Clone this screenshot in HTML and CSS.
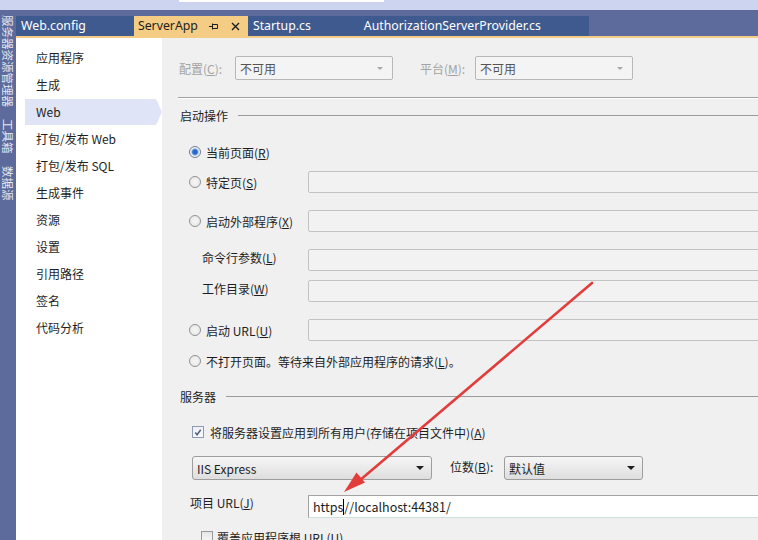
FILE: index.html
```html
<!DOCTYPE html>
<html lang="zh-CN">
<head>
    <meta charset="UTF-8">
    <meta name="viewport" content="width=device-width, initial-scale=1.0">
    <title>ServerApp - 属性</title>
    <link rel="stylesheet" href="styles.css">
</head>
<body>
    <div class="topbar"><div class="topbar-field"></div></div>

    <div class="ide">
        <div class="toolstrip">
            <span class="tooltab">服务器资源管理器</span>
            <span class="tooltab">工具箱</span>
            <span class="tooltab">数据源</span>
        </div>

        <div class="doc">
            <div class="tabs">
                <div class="tab">Web.config</div>
                <div class="tab active">
                    <span>ServerApp</span>
                    <svg class="pin" width="10" height="9" viewBox="0 0 10 9">
                        <path d="M0 4.5H3.5M3.5 1.5V7.5M3.5 2.5H8.5V6.5H3.5" fill="none" stroke="#1e1e1e" stroke-width="1"/>
                    </svg>
                    <svg class="close" width="9" height="9" viewBox="0 0 9 9">
                        <path d="M1 1L8 8M8 1L1 8" stroke="#1e1e1e" stroke-width="1.4"/>
                    </svg>
                </div>
                <div class="tab">Startup.cs</div>
                <div class="tab">AuthorizationServerProvider.cs</div>
            </div>
            <div class="tab-accent"></div>

            <div class="page">
                <ul class="nav">
                    <li>应用程序</li>
                    <li>生成</li>
                    <li class="selected">Web</li>
                    <li>打包/发布 Web</li>
                    <li>打包/发布 SQL</li>
                    <li>生成事件</li>
                    <li>资源</li>
                    <li>设置</li>
                    <li>引用路径</li>
                    <li>签名</li>
                    <li>代码分析</li>
                </ul>

                <div class="props">
                    <div class="config-row">
                        <span class="dim-label">配置(<u>C</u>):</span>
                        <div class="combo disabled"><span>不可用</span><i class="arrow"></i></div>
                        <span class="dim-label platform">平台(<u>M</u>):</span>
                        <div class="combo disabled"><span>不可用</span><i class="arrow"></i></div>
                    </div>

                    <div class="rule"></div>

                    <div class="group-title"><span>启动操作</span></div>

                    <div class="row option-row first">
                        <span class="radio checked"></span>
                        <span>当前页面(<u>R</u>)</span>
                    </div>
                    <div class="row follow">
                        <div class="label-col"><span class="radio"></span><span>特定页(<u>S</u>)</span></div>
                        <div class="textbox"></div>
                    </div>
                    <div class="row">
                        <div class="label-col"><span class="radio"></span><span>启动外部程序(<u>X</u>)</span></div>
                        <div class="textbox"></div>
                    </div>
                    <div class="row">
                        <div class="label-col sub"><span class="sub-label">命令行参数(<u>L</u>)</span></div>
                        <div class="textbox"></div>
                    </div>
                    <div class="row follow">
                        <div class="label-col sub"><span class="sub-label">工作目录(<u>W</u>)</span></div>
                        <div class="textbox"></div>
                    </div>
                    <div class="row">
                        <div class="label-col"><span class="radio"></span><span>启动 URL(<u>U</u>)</span></div>
                        <div class="textbox"></div>
                    </div>
                    <div class="row option-row note">
                        <span class="radio"></span>
                        <span>不打开页面。等待来自外部应用程序的请求(<u>L</u>)。</span>
                    </div>

                    <div class="group-title server"><span>服务器</span></div>

                    <div class="row check-row">
                        <span class="checkbox">
                            <svg width="11" height="11" viewBox="0 0 11 11">
                                <path d="M2.5 5.5L4.5 8L8.5 2.5" fill="none" stroke="#4c5f8a" stroke-width="1.6"/>
                            </svg>
                        </span>
                        <span>将服务器设置应用到所有用户(存储在项目文件中)(<u>A</u>)</span>
                    </div>

                    <div class="row combo-row">
                        <div class="combo server-combo"><span>IIS Express</span><i class="arrow"></i></div>
                        <span class="bits-label">位数(<u>B</u>):</span>
                        <div class="combo bits-combo"><span>默认值</span><i class="arrow"></i></div>
                    </div>

                    <div class="row url-row">
                        <div class="label-col url-label"><span>项目 URL(<u>J</u>)</span></div>
                        <div class="textbox url-box">https<span class="caret"></span>//localhost:44381/</div>
                    </div>

                    <div class="row follow override-row">
                        <span class="checkbox empty"></span>
                        <span>覆盖应用程序根 URL(<u>U</u>)</span>
                    </div>
                </div>
            </div>
        </div>
    </div>

    <!-- red annotation arrow drawn over the screenshot -->
    <svg class="annotation" width="758" height="540" viewBox="0 0 758 540">
        <path d="M592 283L359 481" stroke="#e23d3b" stroke-width="2.6" stroke-linecap="round"/>
        <path d="M344 492L356.5 472.5L365 482.5Z" fill="#e23d3b"/>
    </svg>
</body>
</html>
```

FILE: styles.css
```css
body {
    margin: 0;
    width: 758px;
    height: 540px;
    overflow: hidden;
    position: relative;
    font-family: "Noto Sans CJK SC", "Noto Sans", sans-serif;
    font-size: 12px;
    color: #1e1e1e;
    background: #5c6b9c;
}

.topbar {
    height: 10px;
    background: #ccd4ef;
}

.topbar-field {
    margin-left: 179px;
    width: 205px;
    height: 2px;
    background: #fff;
}

.ide {
    display: flex;
    height: 530px;
}

.toolstrip {
    width: 16px;
    display: flex;
    flex-direction: column;
    align-items: center;
    gap: 12px;
    padding-top: 5px;
}

.tooltab {
    writing-mode: vertical-rl;
    text-orientation: sideways;
    font-size: 11.5px;
    line-height: 14px;
    color: #e4e8f4;
}

.doc {
    flex: 1;
    min-width: 0;
    display: flex;
    flex-direction: column;
    padding-top: 6px;
}

.tabs {
    display: flex;
    height: 20px;
}

.tab {
    padding: 0 48px 0 5px;
    background: #3f5a8f;
    color: #fff;
    font-family: "Noto Sans", sans-serif;
    font-size: 12.3px;
    line-height: 20px;
    white-space: nowrap;
}

.tab.active {
    display: flex;
    align-items: center;
    padding: 0 8px 0 4px;
    background: #f5cc84;
    color: #1e1e1e;
}

.tab .pin {
    margin-left: 11px;
}

.tab .close {
    margin-left: 12px;
}

.tab-accent {
    height: 2px;
    background: #f5cc84;
}

.page {
    flex: 1;
    display: flex;
    min-height: 0;
}

.nav {
    width: 146px;
    margin: 0;
    padding: 7px 0 0;
    list-style: none;
    background: #fff;
}

.nav li {
    height: 26px;
    line-height: 26px;
    margin: 0 0 1px 9px;
    padding-left: 11px;
}

.nav li.selected {
    background: #dfe4f6;
    clip-path: polygon(0 0, calc(100% - 6px) 0, 100% 50%, calc(100% - 6px) 100%, 0 100%);
}

.props {
    flex: 1;
    min-width: 0;
    overflow: hidden;
    background: #f0f0f0;
    padding-left: 16px;
}

/* top configuration / platform bar */
.config-row {
    display: flex;
    align-items: center;
    margin-top: 18px;
    height: 24px;
}

.dim-label {
    width: 56px;
    padding-left: 1px;
    color: #a3a3a3;
    white-space: nowrap;
}

.dim-label.platform {
    width: 55px;
    margin-left: 26px;
}

.combo {
    display: flex;
    align-items: center;
    justify-content: space-between;
    box-sizing: border-box;
    height: 24px;
    padding-left: 4px;
    border: 1px solid #a9a9a9;
    border-radius: 3px;
    white-space: nowrap;
}

.combo.disabled {
    width: 158px;
    background: #f4f4f4;
    border-color: #b8b8b8;
    border-radius: 2px;
    color: #555;
}

.combo .arrow {
    width: 0;
    height: 0;
    margin-right: 7px;
    border-left: 4px solid transparent;
    border-right: 4px solid transparent;
    border-top: 4px solid #1e1e1e;
}

.combo.disabled .arrow {
    margin-right: 9px;
    border-left-width: 3px;
    border-right-width: 3px;
    border-top: 3px solid #a8a8a8;
}

.rule {
    margin-top: 17px;
    border-top: 1px solid #a0a0a0;
    border-bottom: 1px solid #fff;
}

.group-title {
    display: flex;
    align-items: center;
    gap: 10px;
    height: 17px;
    margin-top: 8px;
    padding-left: 2px;
}

.group-title::after {
    content: "";
    flex: 1;
    border-top: 1px solid #9a9a9a;
}

.group-title.server {
    margin-top: 17px;
}

/* form rows */
.row {
    display: flex;
    align-items: center;
    margin-top: 17px;
    height: 22px;
    white-space: nowrap;
}

.row.follow {
    margin-top: 9px;
}

.option-row {
    height: 20px;
    padding-left: 11px;
    gap: 5px;
}

.option-row.first {
    margin-top: 18px;
}

.option-row.note {
    margin-top: 10px;
}

.label-col {
    display: flex;
    align-items: center;
    gap: 5px;
    width: 119px;
    flex-shrink: 0;
    padding-left: 11px;
}

.label-col.sub {
    width: 106px;
    padding-left: 24px;
}

.sub-label {
    padding-bottom: 5px;
}

.radio {
    box-sizing: border-box;
    width: 12px;
    height: 12px;
    flex-shrink: 0;
    border: 1px solid #929292;
    border-radius: 50%;
    background: radial-gradient(circle, #f6f6f6 0, #e4e4e4 100%);
}

.radio.checked {
    border-color: #6f7f99;
    background: radial-gradient(circle, #1e5ec8 0, #2f70d6 2.3px, #a6c3ee 3.4px, #f4f4f4 4.2px, #e2e2e2 100%);
}

.textbox {
    box-sizing: border-box;
    width: 470px;
    height: 22px;
    flex-shrink: 0;
    border: 1px solid #c3c3c3;
    border-radius: 2px;
    background: #f2f2f2;
}

.check-row {
    height: 20px;
    padding-left: 14px;
    gap: 6px;
}

.checkbox {
    box-sizing: border-box;
    display: flex;
    align-items: center;
    justify-content: center;
    width: 12px;
    height: 12px;
    flex-shrink: 0;
    border: 1px solid #8d9ab8;
    background: linear-gradient(#eef0f6, #fafafa);
}

.checkbox.empty {
    border-color: #9a9a9a;
    background: linear-gradient(#e6e6e6, #f8f8f8);
}

.combo-row {
    height: 24px;
    margin-top: 14px;
    padding-left: 14px;
}

.server-combo,
.bits-combo {
    background: linear-gradient(#f6f6f6, #dedede);
    border-color: #9d9d9d;
}

.server-combo {
    width: 240px;
}

.bits-label {
    width: 54px;
    margin-left: 18px;
    padding-bottom: 3px;
}

.bits-combo {
    width: 139px;
}

.url-row {
    height: 23px;
    margin-top: 15px;
}

.label-col.url-label {
    width: 118px;
    padding-left: 12px;
    padding-bottom: 8px;
}

.url-box {
    height: 23px;
    display: flex;
    align-items: center;
    padding-left: 4px;
    background: #fff;
    border-color: #a3a3a3;
    border-bottom-color: #cde2da;
    border-radius: 0;
    font-size: 12.5px;
}

.caret {
    width: 1px;
    height: 16px;
    background: #000;
}

.override-row {
    height: 20px;
    padding-left: 23px;
    gap: 4px;
}

.annotation {
    position: absolute;
    top: 0;
    left: 0;
    pointer-events: none;
}
```
